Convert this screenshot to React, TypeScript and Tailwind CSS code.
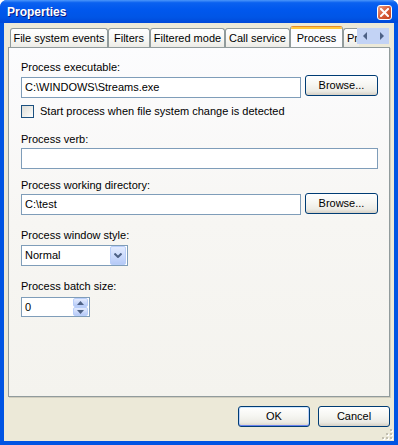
import React from 'react';

const font = "font-['Liberation_Sans',Arial,sans-serif]";

function XpButton({ label, width, isDefault }: { label: string; width: string; isDefault?: boolean }) {
  return (
    <div
      className={`${width} flex h-[21px] items-center justify-center rounded-[3px] border border-[#003C74] bg-[linear-gradient(to_bottom,#FFFFFF_0%,#F6F6F2_45%,#ECEBE5_80%,#D6D0C5_100%)] text-[11px] text-black ${
        isDefault ? 'shadow-[inset_0_1px_0_#CEE7FF,inset_0_-1px_0_#6982EE,inset_1px_0_0_#B9D1FA,inset_-1px_0_0_#B9D1FA]' : ''
      }`}
    >
      {label}
    </div>
  );
}

function TextBox({ value, width }: { value?: string; width: string }) {
  return (
    <div className={`${width} flex h-[21px] items-center border border-[#7F9DB9] bg-white pl-[3px] text-[11px] text-black`}>
      {value}
    </div>
  );
}

function Tab({ label, width }: { label: string; width: string }) {
  return (
    <div
      className={`${width} flex h-[19px] shrink-0 items-center justify-center rounded-t-[3px] border border-b-0 border-[#919B9C] bg-[linear-gradient(to_bottom,#FFFFFF_0%,#F7F7F4_60%,#ECEBE6_100%)] pt-[1px] text-[11px] text-black`}
    >
      {label}
    </div>
  );
}

export default function App() {
  return (
    <div className={`${font} flex h-[445px] w-[398px] flex-col overflow-hidden rounded-t-[7px] bg-[#0054E3]`}>
      {/* title bar */}
      <div className="relative flex h-[23px] shrink-0 items-center bg-[linear-gradient(to_bottom,#4B96FA_0%,#0A61F0_12%,#0058EE_40%,#0055E6_75%,#0049D8_100%)] pl-[7px]">
        <span className="text-[12px] font-bold text-white [text-shadow:1px_1px_0_#0A1883]">Properties</span>
        <div className="absolute left-[377px] top-[5px] flex h-[15px] w-[15px] items-center justify-center rounded-[3px] border border-white bg-[linear-gradient(135deg,#EBA088_0%,#D9623F_45%,#C4411E_100%)]">
          <svg width="9" height="9" viewBox="0 0 9 9">
            <path d="M1 1 L8 8 M8 1 L1 8" stroke="white" strokeWidth="2" strokeLinecap="square" />
          </svg>
        </div>
      </div>

      {/* client area */}
      <div className="relative mx-[4px] mb-[4px] flex flex-1 flex-col bg-[#ECE9D8]">
        {/* tabs */}
        <div className="relative flex h-[24px] shrink-0 items-end overflow-hidden pl-[6px] pr-[4px]">
          <Tab label="File system events" width="w-[98px]" />
          <Tab label="Filters" width="w-[42px]" />
          <Tab label="Filtered mode" width="w-[75px]" />
          <Tab label="Call service" width="w-[65px]" />
          <div className="relative z-10 mb-[-1px] flex h-[22px] w-[53px] shrink-0 flex-col overflow-hidden rounded-t-[3px] border border-b-0 border-[#919B9C] border-t-[#E68B2C] bg-[#FCFCFE] text-[11px] text-black">
            <div className="h-[2px] bg-[#FFC73C]" />
            <div className="flex flex-1 items-start justify-center pt-[1px]">Process</div>
          </div>
          <div className="flex h-[19px] w-[16px] shrink-0 items-center overflow-hidden rounded-tl-[3px] border border-b-0 border-r-0 border-[#919B9C] bg-[linear-gradient(to_bottom,#FFFFFF_0%,#F7F7F4_60%,#ECEBE6_100%)] pl-[3px] pt-[1px] text-[11px] text-black">
            Pr
          </div>
          <div className="absolute left-[353px] top-[5px] flex h-[16px] w-[32px] items-center justify-around bg-[#C3D3F5]">
            <svg width="5" height="8" viewBox="0 0 5 8">
              <path d="M4 0 L0 4 L4 8 Z" fill="#4D6185" />
            </svg>
            <svg width="5" height="8" viewBox="0 0 5 8">
              <path d="M1 0 L5 4 L1 8 Z" fill="#4D6185" />
            </svg>
          </div>
        </div>

        {/* panel */}
        <div className="mx-[4px] h-[350px] shrink-0 border border-[#919B9C] bg-[linear-gradient(to_bottom,#FCFCFE_0%,#F7F6F3_50%,#F4F3EE_100%)] pl-[12px] pr-[11px] text-[11px] leading-[13px] text-black shadow-[1px_1px_0_#D0CDBE]">
          <div className="mt-[13px]">Process executable:</div>
          <div className="mt-[1px] flex items-start gap-[4px]">
            <div className="mt-[2px]">
              <TextBox value="C:\WINDOWS\Streams.exe" width="w-[280px]" />
            </div>
            <XpButton label="Browse..." width="w-[73px]" />
          </div>
          <div className="mt-[7px] flex items-center">
            <div className="h-[13px] w-[13px] border border-[#1C5180] bg-[linear-gradient(135deg,#DCDCD7_0%,#F0F0EC_60%,#FFFFFF_100%)]" />
            <span className="ml-[6px]">Start process when file system change is detected</span>
          </div>
          <div className="mt-[15px]">Process verb:</div>
          <div className="mt-[2px]">
            <TextBox width="w-[357px]" />
          </div>
          <div className="mt-[10px]">Process working directory:</div>
          <div className="mt-[1px] flex items-start gap-[4px]">
            <div className="mt-[1px]">
              <TextBox value="C:\test" width="w-[280px]" />
            </div>
            <XpButton label="Browse..." width="w-[73px]" />
          </div>
          <div className="mt-[14px]">Process window style:</div>
          <div className="mt-[3px] flex h-[21px] w-[107px] items-center justify-between border border-[#7F9DB9] bg-white pl-[3px] pr-[1px]">
            <span>Normal</span>
            <div className="flex h-[19px] w-[16px] items-center justify-center rounded-[2px] border border-[#B9CEF9] bg-[linear-gradient(to_bottom,#E3EBFE_0%,#CCDBFC_50%,#B6CAF7_100%)]">
              <svg width="8" height="5" viewBox="0 0 8 5">
                <path d="M0.5 0.5 L4 4 L7.5 0.5" stroke="#4D6185" strokeWidth="2" fill="none" />
              </svg>
            </div>
          </div>
          <div className="mt-[14px]">Process batch size:</div>
          <div className="mt-[4px] flex h-[20px] w-[69px] items-center justify-between border border-[#7F9DB9] bg-white pl-[3px] pr-[1px]">
            <span>0</span>
            <div className="flex h-[18px] w-[15px] flex-col">
              <div className="flex flex-1 items-center justify-center rounded-[2px] border border-[#B9CEF9] bg-[linear-gradient(to_bottom,#E3EBFE,#B6CAF7)]">
                <svg width="7" height="4" viewBox="0 0 7 4">
                  <path d="M0 4 L3.5 0 L7 4 Z" fill="#4D6185" />
                </svg>
              </div>
              <div className="flex flex-1 items-center justify-center rounded-[2px] border border-[#B9CEF9] bg-[linear-gradient(to_bottom,#E3EBFE,#B6CAF7)]">
                <svg width="7" height="4" viewBox="0 0 7 4">
                  <path d="M0 0 L3.5 4 L7 0 Z" fill="#4D6185" />
                </svg>
              </div>
            </div>
          </div>
        </div>

        {/* buttons */}
        <div className="mt-[9px] flex justify-end gap-[8px] pr-[4px]">
          <XpButton label="OK" width="w-[72px]" isDefault />
          <XpButton label="Cancel" width="w-[72px]" />
        </div>

        {/* resize grip */}
        <svg className="absolute bottom-[1px] right-[1px]" width="11" height="11" viewBox="0 0 11 11">
          {[
            [8, 0],
            [4, 4],
            [8, 4],
            [0, 8],
            [4, 8],
            [8, 8],
          ].map(([x, y]) => (
            <g key={`${x}-${y}`}>
              <rect x={x + 1} y={y + 1} width="2" height="2" fill="#FFFFFF" />
              <rect x={x} y={y} width="2" height="2" fill="#C2BFB0" />
            </g>
          ))}
        </svg>
      </div>
    </div>
  );
}
